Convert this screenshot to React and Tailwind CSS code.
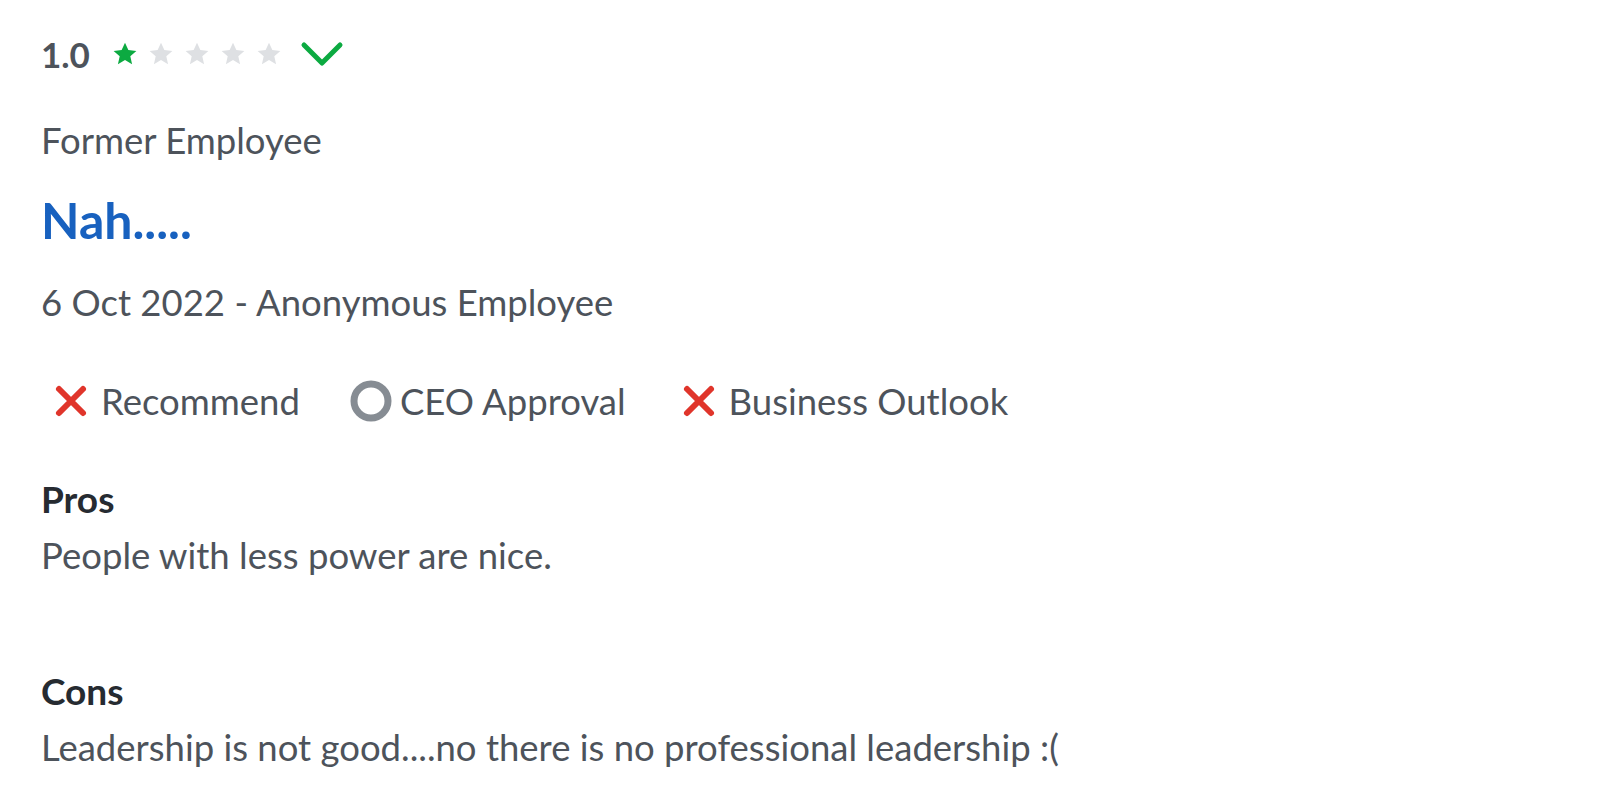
import React from 'react'

const STAR = 'M12 1.5l3.09 6.88 7.41.74-5.6 4.97 1.64 7.33L12 17.6l-6.54 3.82 1.64-7.33-5.6-4.97 7.41-.74z'

function Star({ filled }) {
  return (
    <svg viewBox="0 0 24 24" className="w-[26px] h-[26px]">
      <path d={STAR} fill={filled ? '#0caa41' : '#dee0e3'} />
    </svg>
  )
}

function RedX() {
  return (
    <svg viewBox="0 0 36 36" className="w-[36px] h-[36px]">
      <path d="M6 6L30 30M30 6L6 30" stroke="#e0352b" strokeWidth="6" strokeLinecap="round" />
    </svg>
  )
}

function Ring() {
  return (
    <svg viewBox="0 0 42 42" className="w-[42px] h-[42px]">
      <circle cx="21" cy="21" r="17" fill="none" stroke="#868c93" strokeWidth="7" />
    </svg>
  )
}

function Status({ icon, label, className }) {
  return (
    <div className={'flex items-center ' + className}>
      {icon}
      <span>{label}</span>
    </div>
  )
}

export default function App() {
  return (
    <div
      className="min-h-[810px] bg-white pl-[41px] pt-[28px] text-[#4d535b]"
      style={{ fontFamily: 'Lato, "Open Sans", sans-serif' }}
    >
      {/* rating row */}
      <div className="flex items-center h-[52px]">
        <span className="text-[35px] font-bold text-[#4d535b] leading-none">1.0</span>
        <div className="flex items-center gap-[10px] ml-[22px]">
          <Star filled />
          <Star />
          <Star />
          <Star />
          <Star />
        </div>
        <svg viewBox="0 0 44 28" className="w-[44px] h-[28px] ml-[18px]">
          <path d="M4 5L22 23L40 5" fill="none" stroke="#0caa41" strokeWidth="5" strokeLinecap="round" strokeLinejoin="round" />
        </svg>
      </div>

      <p className="mt-[38px] text-[36.5px] leading-[44px]">Former Employee</p>

      <h2 className="mt-[32px] text-[50px] leading-[52px] font-bold text-[#1861bf]">Nah.....</h2>

      <p className="mt-[34px] text-[36.5px] leading-[44px]">6 Oct 2022 - Anonymous Employee</p>

      <div className="flex items-center mt-[53px] text-[36.5px] leading-[48px]">
        <Status className="ml-[12px] gap-[12px]" icon={<RedX />} label="Recommend" />
        <Status className="ml-[50px] gap-[8px]" icon={<Ring />} label="CEO Approval" />
        <Status className="ml-[55px] gap-[12px]" icon={<RedX />} label="Business Outlook" />
      </div>

      <div className="mt-[48px]">
        <p className="text-[37px] leading-[52px] font-bold text-[#262b31]">Pros</p>
        <p className="text-[36.5px] leading-[60px]">People with less power are nice.</p>
      </div>

      <div className="mt-[80px]">
        <p className="text-[37px] leading-[52px] font-bold text-[#262b31]">Cons</p>
        <p className="text-[36.5px] leading-[60px]">Leadership is not good....no there is no professional leadership :(</p>
      </div>
    </div>
  )
}
